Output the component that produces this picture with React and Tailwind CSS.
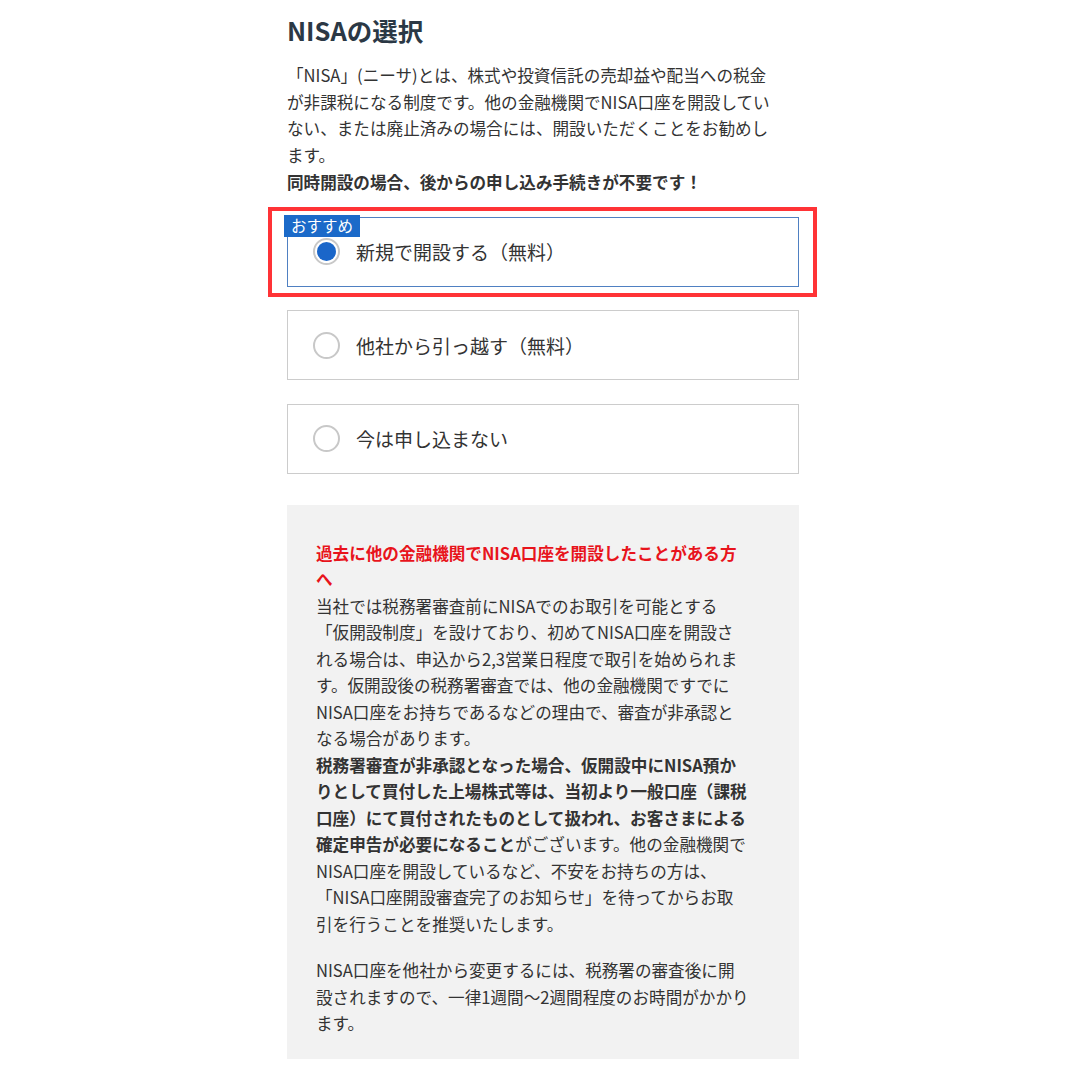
import { useState } from 'react';

const options = [
  { id: 'new', label: '新規で開設する（無料）', recommended: true },
  { id: 'move', label: '他社から引っ越す（無料）' },
  { id: 'none', label: '今は申し込まない' },
];

const Radio = ({ checked }) => (
  <span className="flex h-[27px] w-[27px] shrink-0 items-center justify-center rounded-full border-2 border-[#c8c8c8] bg-white">
    {checked && <span className="h-[19px] w-[19px] rounded-full bg-[#1a66c9]" />}
  </span>
);

const OptionCard = ({ option, checked, onSelect }) => (
  <div className="relative">
    {option.recommended && (
      <div className="pointer-events-none absolute -top-[10px] -left-[19px] -right-[18px] -bottom-[10px] border-4 border-[#ff3336]" />
    )}
    <button
      type="button"
      onClick={onSelect}
      className={`relative flex h-[70px] w-full items-center gap-4 border bg-white pl-[25px] text-left ${
        checked ? 'border-[#4f80c2]' : 'border-[#cccccc]'
      }`}
    >
      {option.recommended && (
        <span className="absolute -top-[3px] -left-[4px] flex h-[22px] w-[76px] items-center justify-center bg-[#1b6ac9] text-[15.5px] leading-none text-white">
          おすすめ
        </span>
      )}
      <Radio checked={checked} />
      <span className="text-[19px] leading-none text-[#333]">{option.label}</span>
    </button>
  </div>
);

export default function App() {
  const [selected, setSelected] = useState('new');

  return (
    <div
      className="min-h-[1080px] bg-white"
      style={{ fontFamily: '"Noto Sans CJK JP", "Noto Sans", sans-serif' }}
    >
      <div className="mx-auto w-[512px] pt-[14px] pb-6 translate-x-[3px]">
        <h1 className="text-[25.5px] font-bold leading-[32px] text-[#2b3845]">NISAの選択</h1>

        <p className="mt-4 text-[16.6px] leading-[26.7px] text-[#333] whitespace-nowrap">
          「NISA」(ニーサ)とは、株式や投資信託の売却益や配当への税金
          <br />
          が非課税になる制度です。他の金融機関でNISA口座を開設してい
          <br />
          ない、または廃止済みの場合には、開設いただくことをお勧めし
          <br />
          ます。
          <br />
          <strong className="font-bold">同時開設の場合、後からの申し込み手続きが不要です！</strong>
        </p>

        <div className="mt-[21px] flex flex-col gap-[23.5px]">
          {options.map((o) => (
            <OptionCard
              key={o.id}
              option={o}
              checked={selected === o.id}
              onSelect={() => setSelected(o.id)}
            />
          ))}
        </div>

        <div className="mt-[31px] bg-[#f2f2f2] pt-[35px] pb-[22px] pl-[29px] pr-4 text-[16.6px] leading-[26.5px] text-[#333] whitespace-nowrap">
          <p className="font-bold text-[#e8141c]">
            過去に他の金融機関でNISA口座を開設したことがある方
            <br />へ
          </p>
          <p>
            当社では税務署審査前にNISAでのお取引を可能とする
            <br />
            「仮開設制度」を設けており、初めてNISA口座を開設さ
            <br />
            れる場合は、申込から2,3営業日程度で取引を始められま
            <br />
            す。仮開設後の税務署審査では、他の金融機関ですでに
            <br />
            NISA口座をお持ちであるなどの理由で、審査が非承認と
            <br />
            なる場合があります。
            <br />
            <strong className="font-bold">
              税務署審査が非承認となった場合、仮開設中にNISA預か
              <br />
              りとして買付した上場株式等は、当初より一般口座（課税
              <br />
              口座）にて買付されたものとして扱われ、お客さまによる
              <br />
              確定申告が必要になること
            </strong>
            がございます。他の金融機関で
            <br />
            NISA口座を開設しているなど、不安をお持ちの方は、
            <br />
            「NISA口座開設審査完了のお知らせ」を待ってからお取
            <br />
            引を行うことを推奨いたします。
          </p>
          <p className="mt-5">
            NISA口座を他社から変更するには、税務署の審査後に開
            <br />
            設されますので、一律1週間～2週間程度のお時間がかかり
            <br />
            ます。
          </p>
        </div>
      </div>
    </div>
  );
}
